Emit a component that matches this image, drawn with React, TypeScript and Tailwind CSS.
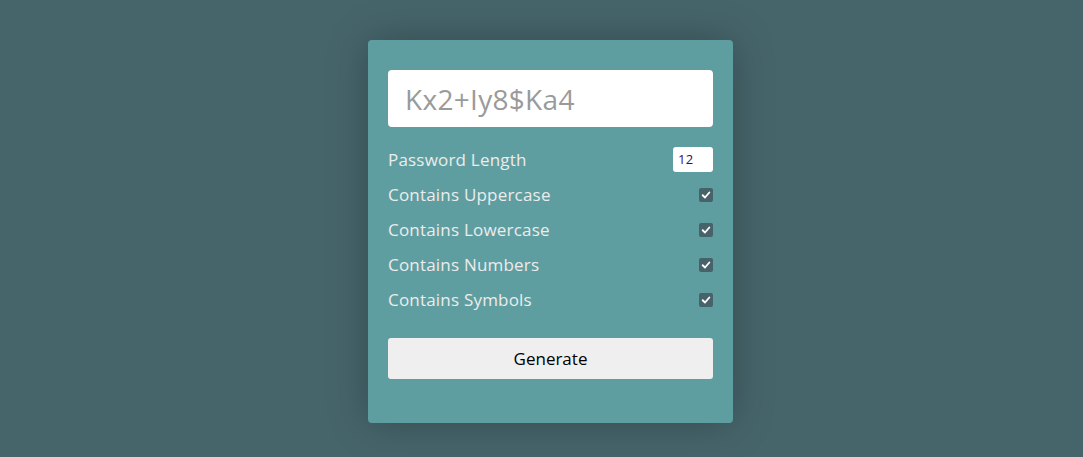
import { useState } from "react";

const options = [
  "Contains Uppercase",
  "Contains Lowercase",
  "Contains Numbers",
  "Contains Symbols",
];

function Check() {
  return (
    <span className="flex h-[14px] w-[14px] items-center justify-center rounded-[2px] bg-[#48626a]">
      <svg viewBox="0 0 12 12" className="h-[10px] w-[10px]">
        <path
          d="M2 6.3 L4.8 9 L10 3"
          fill="none"
          stroke="white"
          strokeWidth="2.2"
          strokeLinecap="round"
          strokeLinejoin="round"
        />
      </svg>
    </span>
  );
}

export default function App() {
  const [length] = useState(12);

  return (
    <div
      className="flex h-[457px] w-full justify-center bg-[#46656b] pl-[18px] pt-[40px]"
      style={{ fontFamily: '"Open Sans", "Noto Sans", sans-serif' }}
    >
      <div className="flex h-[383px] w-[365px] flex-col rounded-[4px] bg-[#5f9ea0] px-[20px] pt-[30px] shadow-[0_0_40px_rgba(0,0,0,0.25)]">
        <div className="flex h-[57px] items-center rounded-[4px] bg-white px-[17px] text-[28px] tracking-[0.3px] text-[#9a9a9a]">
          Kx2+Iy8$Ka4
        </div>

        <div className="mt-[20px] flex h-[25px] items-center justify-between text-[17px] tracking-[0.2px] text-[#ececec]">
          <span>Password Length</span>
          <span className="flex h-[25px] w-[40px] items-center rounded-[3px] bg-white pl-[5px] text-[13px] text-[#3b0a66]">
            {length}
          </span>
        </div>

        <div className="mt-[5px] flex flex-col">
          {options.map((label) => (
            <div
              key={label}
              className="flex h-[35px] items-center justify-between text-[17px] tracking-[0.2px] text-[#ececec]"
            >
              <span>{label}</span>
              <Check />
            </div>
          ))}
        </div>

        <button className="mt-[21px] h-[41px] w-full rounded-[3px] bg-[#efefef] text-[17px] text-black">
          Generate
        </button>
      </div>
    </div>
  );
}
